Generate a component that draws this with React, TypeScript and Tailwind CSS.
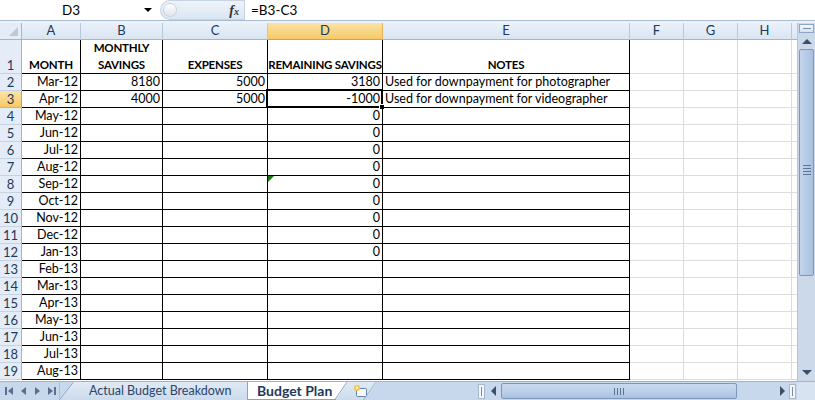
import React from "react";

type Col = { key: string; w: number };

const cols: Col[] = [
  { key: "A", w: 59 },
  { key: "B", w: 82 },
  { key: "C", w: 105 },
  { key: "D", w: 115 },
  { key: "E", w: 247 },
  { key: "F", w: 54 },
  { key: "G", w: 54 },
  { key: "H", w: 54 },
  { key: "", w: 60 },
];

const months = [
  "Mar-12", "Apr-12", "May-12", "Jun-12", "Jul-12", "Aug-12", "Sep-12", "Oct-12", "Nov-12",
  "Dec-12", "Jan-13", "Feb-13", "Mar-13", "Apr-13", "May-13", "Jun-13", "Jul-13", "Aug-13",
];

type RowData = { a: string; b?: string; c?: string; d?: string; e?: string };

const rows: RowData[] = months.map((m, i) => {
  if (i === 0) return { a: m, b: "8180", c: "5000", d: "3180", e: "Used for downpayment for photographer" };
  if (i === 1) return { a: m, b: "4000", c: "5000", d: "-1000", e: "Used for downpayment for videographer" };
  if (i <= 10) return { a: m, d: "0" };
  return { a: m };
});

function ColHeader({ col }: { col: Col }) {
  const active = col.key === "D";
  return (
    <div
      style={{ width: col.w }}
      className={
        "h-full shrink-0 flex items-center justify-center border-r border-b text-[13px] " +
        (active
          ? "bg-gradient-to-b from-[#fbe3a8] to-[#f6c964] border-r-[#e7b14f] border-b-[#f29536] text-[#1e395b]"
          : "bg-gradient-to-b from-[#eaf1fa] to-[#dae5f2] border-r-[#b7c9dd] border-b-[#9eb6ce] text-[#1e395b]")
      }
    >
      {col.key}
    </div>
  );
}

function RowHeader({ n, tall }: { n: number; tall?: boolean }) {
  const active = n === 3;
  return (
    <div
      className={
        "w-[22px] shrink-0 flex justify-center border-r border-b text-[13px] leading-[16px] " +
        (tall ? "h-[34px] items-end " : "h-[17px] items-end ") +
        (active
          ? "bg-gradient-to-b from-[#fbe3a8] to-[#f6c964] border-r-[#f29536] border-b-[#e7b14f] text-[#1e395b]"
          : "bg-[#e4ecf7] border-r-[#9eb6ce] border-b-[#c5d3e3] text-[#1e395b]")
      }
    >
      {n}
    </div>
  );
}

function Cell({
  w,
  inTable,
  tall,
  align,
  bold,
  children,
  extra,
}: {
  w: number;
  inTable: boolean;
  tall?: boolean;
  align: "left" | "right" | "center";
  bold?: boolean;
  children?: React.ReactNode;
  extra?: React.ReactNode;
}) {
  return (
    <div
      style={{ width: w }}
      className={
        "relative shrink-0 flex items-end border-r border-b leading-[16px] whitespace-nowrap " +
        (tall ? "h-[34px] " : "h-[17px] ") +
        (inTable ? "border-black " : "border-[#dadcdd] ") +
        (align === "left" ? "justify-start pl-[2px] " : align === "right" ? "justify-end pr-[2px] " : "justify-center text-center ") +
        (bold ? "font-bold text-[11.5px] tracking-[-0.2px]" : "text-[12.5px]")
      }
    >
      {children}
      {extra}
    </div>
  );
}

function Selection() {
  return (
    <div className="absolute -left-[2px] -top-[2px] -right-[1px] -bottom-[1px] border-2 border-black pointer-events-none">
      <div className="absolute inset-0 border border-white" />
      <div className="absolute -right-[4px] -bottom-[4px] w-[6px] h-[6px] bg-black border border-white" />
    </div>
  );
}

function ErrorMark() {
  return (
    <div className="absolute left-0 top-0 w-0 h-0 border-t-[6px] border-r-[6px] border-t-[#18780f] border-r-transparent" />
  );
}

function VScrollbar() {
  return (
    <div className="w-[18px] shrink-0 flex flex-col bg-[#cbd9ea] border-l border-[#b3c5dc]">
      <div className="h-[9px] mx-[1px] mt-[1px] border border-[#8ea6c4] bg-gradient-to-b from-[#f3f7fc] to-[#d6e2f0] flex items-center justify-center">
        <div className="w-[8px] h-px bg-[#7a90ad]" />
      </div>
      <div className="h-[16px] flex items-center justify-center">
        <div className="w-0 h-0 border-l-[5px] border-r-[5px] border-b-[5px] border-l-transparent border-r-transparent border-b-[#3b4f6b]" />
      </div>
      <div className="h-[227px] mx-[1px] rounded-[2px] border border-[#7f98ba] bg-gradient-to-r from-[#c3d5ec] via-[#b7cbe6] to-[#a8c0e0] flex items-center justify-center">
        <div className="flex flex-col gap-[2px] mt-[14px]">
          <div className="w-[8px] h-px bg-[#5d7595]" />
          <div className="w-[8px] h-px bg-[#5d7595]" />
          <div className="w-[8px] h-px bg-[#5d7595]" />
          <div className="w-[8px] h-px bg-[#5d7595]" />
        </div>
      </div>
      <div className="flex-1" />
      <div className="h-[14px] mb-[2px] flex items-center justify-center">
        <div className="w-0 h-0 border-l-[5px] border-r-[5px] border-t-[5px] border-l-transparent border-r-transparent border-t-[#3b4f6b]" />
      </div>
    </div>
  );
}

function NavArrow({ dir, bar }: { dir: "l" | "r"; bar?: boolean }) {
  return (
    <div className="w-[15px] h-full flex items-center justify-center">
      {bar && dir === "l" && <div className="w-[2px] h-[8px] bg-[#5a6f8c] mr-[1px]" />}
      <div
        className={
          "w-0 h-0 border-t-[4px] border-b-[4px] border-t-transparent border-b-transparent " +
          (dir === "l" ? "border-r-[5px] border-r-[#5a6f8c]" : "border-l-[5px] border-l-[#5a6f8c]")
        }
      />
      {bar && dir === "r" && <div className="w-[2px] h-[8px] bg-[#5a6f8c] ml-[1px]" />}
    </div>
  );
}

function TabBar() {
  return (
    <div className="h-[19px] flex bg-[#c8d8ec] border-t border-[#9db3cf] text-[12.5px] leading-none">
      <div className="w-[60px] flex items-center pl-[2px] border-r border-[#a9bdd6]">
        <NavArrow dir="l" bar />
        <NavArrow dir="l" />
        <NavArrow dir="r" />
        <NavArrow dir="r" bar />
      </div>
      <div className="relative w-[190px] -ml-[2px] h-full bg-gradient-to-b from-[#e1eaf5] to-[#ccdbed] [clip-path:polygon(15px_0,100%_0,100%_100%,0_100%)] flex items-center pl-[31px] text-[#2c4566]">
        <svg className="absolute left-0 top-0" width="16" height="19">
          <line x1="0.5" y1="19" x2="15.5" y2="0" stroke="#8aa2c2" strokeWidth="1" />
        </svg>
        Actual Budget Breakdown
        <div className="absolute right-0 top-0 bottom-0 w-px bg-[#8aa2c2]" />
      </div>
      <div className="relative w-[100px] h-full bg-white [clip-path:polygon(0_0,100%_0,88px_100%,0_100%)] flex items-center pl-[9px] font-bold text-[#1e395b] text-[14px] border-b border-[#8aa2c2]">
        Budget Plan
        <svg className="absolute left-[86px] top-0" width="14" height="19">
          <line x1="0" y1="19" x2="13" y2="0" stroke="#8aa2c2" strokeWidth="1" />
        </svg>
      </div>
      <div className="relative w-[40px] -ml-[12px] h-full bg-gradient-to-b from-[#e1eaf5] to-[#ccdbed] [clip-path:polygon(12px_0,100%_0,28px_100%,0_100%)] flex items-center pl-[17px]">
        <svg width="16" height="14" viewBox="0 0 16 14">
          <rect x="3.5" y="4.5" width="10" height="8" rx="1" fill="#f4f7fb" stroke="#6b82a3" />
          <circle cx="4" cy="4" r="3" fill="#f6c343" />
          <circle cx="4" cy="4" r="1.4" fill="#fff3b8" />
        </svg>
        <svg className="absolute left-[27px] top-0" width="14" height="19">
          <line x1="0" y1="19" x2="13" y2="0" stroke="#8aa2c2" strokeWidth="1" />
        </svg>
      </div>
      <div className="flex-1" />
      <div className="w-[337px] h-full flex items-center">
        <div className="w-[7px] h-[15px] bg-[#f3f6fa] border border-[#a6b8cf] flex items-center justify-center">
          <div className="w-px h-[9px] bg-[#7a8ea9]" />
        </div>
        <div className="w-[16px] h-full flex items-center justify-center">
          <div className="w-0 h-0 border-t-[5px] border-b-[5px] border-r-[5px] border-t-transparent border-b-transparent border-r-[#3b4f6b]" />
        </div>
        <div className="w-[236px] h-[16px] rounded-[2px] border border-[#7f98ba] bg-gradient-to-b from-[#c9d9ee] via-[#bcd0ea] to-[#a9c1e1] flex items-center justify-center gap-[2px]">
          <div className="w-px h-[7px] bg-[#5d7595]" />
          <div className="w-px h-[7px] bg-[#5d7595]" />
          <div className="w-px h-[7px] bg-[#5d7595]" />
          <div className="w-px h-[7px] bg-[#5d7595]" />
        </div>
        <div className="flex-1" />
        <div className="w-[14px] h-full flex items-center justify-center">
          <div className="w-0 h-0 border-t-[5px] border-b-[5px] border-l-[5px] border-t-transparent border-b-transparent border-l-[#3b4f6b]" />
        </div>
        <div className="w-[7px] h-[15px] bg-[#f3f6fa] border border-[#a6b8cf] flex items-center justify-center mr-[1px]">
          <div className="w-px h-[9px] bg-[#7a8ea9]" />
        </div>
        <div className="w-[18px] h-full bg-[#d7e3f1]" />
      </div>
    </div>
  );
}

export default function App() {
  return (
    <div className="w-[815px] h-[400px] overflow-hidden bg-white flex flex-col font-['Lato','Liberation_Sans',sans-serif] text-black">
      {/* formula bar */}
      <div className="h-[20px] flex items-center bg-white">
        <div className="w-[142px] text-center text-[13.5px]">D3</div>
        <div className="w-[12px] flex justify-center">
          <div className="w-0 h-0 border-l-[4px] border-r-[4px] border-t-[4px] border-l-transparent border-r-transparent border-t-black" />
        </div>
        <div className="w-[6px]" />
        <div className="w-[84px] h-[20px] rounded-l-[10px] bg-gradient-to-b from-[#eef3f9] to-[#dce6f2] border border-r-0 border-[#c6d3e2] flex items-center">
          <div className="ml-[2px] w-[14px] h-[14px] rounded-full bg-gradient-to-b from-[#ffffff] to-[#dfe6ee] border border-[#c8d2de]" />
          <div className="flex-1" />
          <div className="mr-[5px] font-['Liberation_Serif',serif] italic font-bold text-[14px] text-[#333]">
            f<span className="text-[10px]">x</span>
          </div>
        </div>
        <div className="flex-1 h-[20px] border-l border-[#c6d3e2] pl-[6px] text-[13.5px] flex items-center">=B3-C3</div>
      </div>
      <div className="h-[3px] border-t border-[#a8bcd4] bg-[#eef2f7]" />
      {/* sheet */}
      <div className="flex flex-1 min-h-0">
        <div className="flex-1 overflow-hidden flex flex-col">
          {/* column headers */}
          <div className="h-[17px] flex shrink-0">
            <div className="w-[22px] shrink-0 h-full bg-[#e4ecf7] border-r border-b border-[#9eb6ce] relative">
              <div className="absolute right-[3px] bottom-[3px] w-0 h-0 border-b-[9px] border-l-[9px] border-b-[#b9c8da] border-l-transparent" />
            </div>
            {cols.map((c, i) => (
              <ColHeader key={i} col={c} />
            ))}
          </div>
          {/* row 1 */}
          <div className="flex shrink-0">
            <RowHeader n={1} tall />
            <Cell w={59} inTable tall align="center" bold>MONTH</Cell>
            <Cell w={82} inTable tall align="center" bold>
              <span className="whitespace-normal leading-[17px]">MONTHLY<br />SAVINGS</span>
            </Cell>
            <Cell w={105} inTable tall align="center" bold>EXPENSES</Cell>
            <Cell w={115} inTable tall align="center" bold>REMAINING SAVINGS</Cell>
            <Cell w={247} inTable tall align="center" bold>NOTES</Cell>
            <Cell w={54} inTable={false} tall align="left" />
            <Cell w={54} inTable={false} tall align="left" />
            <Cell w={54} inTable={false} tall align="left" />
            <Cell w={60} inTable={false} tall align="left" />
          </div>
          {rows.map((r, i) => {
            const n = i + 2;
            return (
              <div key={n} className="flex shrink-0">
                <RowHeader n={n} />
                <Cell w={59} inTable align="right">{r.a}</Cell>
                <Cell w={82} inTable align="right">{r.b}</Cell>
                <Cell w={105} inTable align="right">{r.c}</Cell>
                <Cell
                  w={115}
                  inTable
                  align="right"
                  extra={n === 3 ? <Selection /> : n === 8 ? <ErrorMark /> : null}
                >
                  {r.d}
                </Cell>
                <Cell w={247} inTable align="left">{r.e}</Cell>
                <Cell w={54} inTable={false} align="left" />
                <Cell w={54} inTable={false} align="left" />
                <Cell w={54} inTable={false} align="left" />
                <Cell w={60} inTable={false} align="left" />
              </div>
            );
          })}
        </div>
        <VScrollbar />
      </div>
      <TabBar />
    </div>
  );
}
